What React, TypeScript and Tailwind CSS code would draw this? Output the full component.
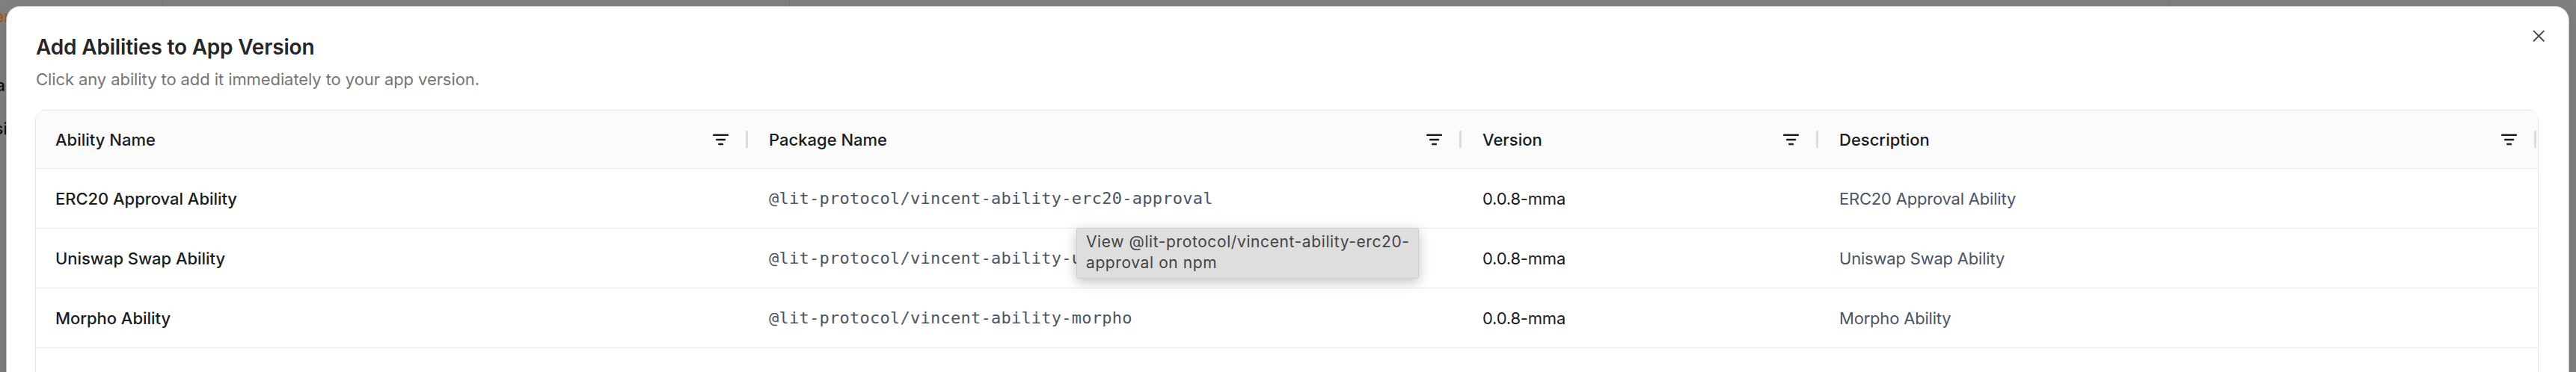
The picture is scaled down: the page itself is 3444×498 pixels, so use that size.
import React from "react";

const columns = [
  { label: "Ability Name", width: "w-[954px]" },
  { label: "Package Name", width: "w-[954px]" },
  { label: "Version", width: "w-[477px]" },
  { label: "Description", width: "flex-1" },
];

const abilities = [
  { name: "ERC20 Approval Ability", pkg: "@lit-protocol/vincent-ability-erc20-approval", version: "0.0.8-mma" },
  { name: "Uniswap Swap Ability", pkg: "@lit-protocol/vincent-ability-u", version: "0.0.8-mma" },
  { name: "Morpho Ability", pkg: "@lit-protocol/vincent-ability-morpho", version: "0.0.8-mma" },
];

function FilterIcon() {
  return (
    <svg width="24" height="18" viewBox="0 0 24 18" fill="none" stroke="#181d1f" strokeWidth="2.5" strokeLinecap="round">
      <path d="M4.2 2.7H23M8.2 8.9H19M11.3 15.1H15.9" />
    </svg>
  );
}

export default function App() {
  return (
    <div className="relative h-[498px] w-[3444px] overflow-hidden bg-[#7f7f7f] pt-[9px] pl-[9px] pr-[10px] font-['Inter',sans-serif]">
      <div className="absolute left-[217px] top-0 h-[9px] w-px bg-[#747474]" />
      <div className="absolute left-[1055px] top-0 h-[9px] w-px bg-[#747474]" />
      <div className="absolute left-[2899px] top-0 h-[9px] w-px bg-[#747474]" />
      <span className="absolute right-[3430px] top-[7px] text-[22px] leading-[30px] font-medium text-[#a8560a]">er</span>
      <span className="absolute right-[3437px] top-[99px] text-[22px] leading-[30px] font-medium text-[#0b0f18]">a</span>
      <span className="absolute right-[3434px] top-[157px] text-[22px] leading-[30px] font-medium text-[#0b0f18]">si</span>

      <div className="relative flex h-[600px] flex-col rounded-[18px] bg-white pl-[38px] pr-[40px] pt-[34px] shadow-[0_10px_24px_rgba(0,0,0,0.12)] ring-1 ring-[#e5e5e5]/70">
        <h2 className="pl-px text-[28px] leading-[40px] font-semibold tracking-[-0.18px] text-[#262626]"><span>Add Abilities to App Version</span></h2>
        <p className="mt-[5px] pl-px text-[22px] leading-[36px] tracking-[-0.09px] text-[#757575]"><span>Click any ability to add it immediately to your app version.</span></p>
        <svg className="absolute right-[32px] top-[31px]" width="16" height="16" viewBox="0 0 16 16" stroke="#4b4b4b" strokeWidth="2" strokeLinecap="round">
          <path d="M1.6 1.6L14.8 14.8M14.8 1.6L1.6 14.8" />
        </svg>

        <div className="mt-[23px] flex flex-1 flex-col overflow-hidden rounded-t-[14px] border border-[#e6e6e7]">
          <div className="flex h-[78px] border-b border-[#e6e6e7] bg-[#fbfbfb]">
            {columns.map((c) => (
              <div key={c.label} className={`flex shrink-0 items-center justify-between pl-[26px] ${c.width}`}>
                <span className="text-[22px] leading-[30px] font-medium text-[#181d1f]">{c.label}</span>
                <div className="flex items-center gap-[23px] pr-[2px]">
                  <FilterIcon />
                  <div className="h-[23px] w-[3px] bg-[#dcdcdd]" />
                </div>
              </div>
            ))}
          </div>
          {abilities.map((a) => (
            <div key={a.name} className="flex h-[80px] items-center border-b border-[#ebebeb] text-[22px] leading-[30px]">
              <div className="w-[954px] pl-[26px] font-medium tracking-[-0.04px] text-[#181d1f]"><span>{a.name}</span></div>
              <div className="w-[954px] pl-[26px] font-['DejaVu_Sans_Mono',monospace] tracking-[0.25px] text-[#4a5565]"><span>{a.pkg}</span></div>
              <div className="w-[477px] pl-[26px] tracking-[-0.2px] text-[#181d1f]"><span>{a.version}</span></div>
              <div className="flex-1 pl-[26px] tracking-[-0.2px] text-[#4a5565]"><span>{a.name}</span></div>
            </div>
          ))}
        </div>
      </div>

      <div className="absolute left-[1439px] top-[305px] h-[68px] w-[458px] rounded-[3px] border border-[#cfcfcf] bg-[#dedede] px-[12px] pt-[4px] text-[21px] leading-[28px] tracking-[0.6px] whitespace-nowrap text-[#444444] shadow-[0_4px_16px_rgba(0,0,0,0.25)]">
        View @lit-protocol/vincent-ability-erc20-<br />approval on npm
      </div>
    </div>
  );
}
